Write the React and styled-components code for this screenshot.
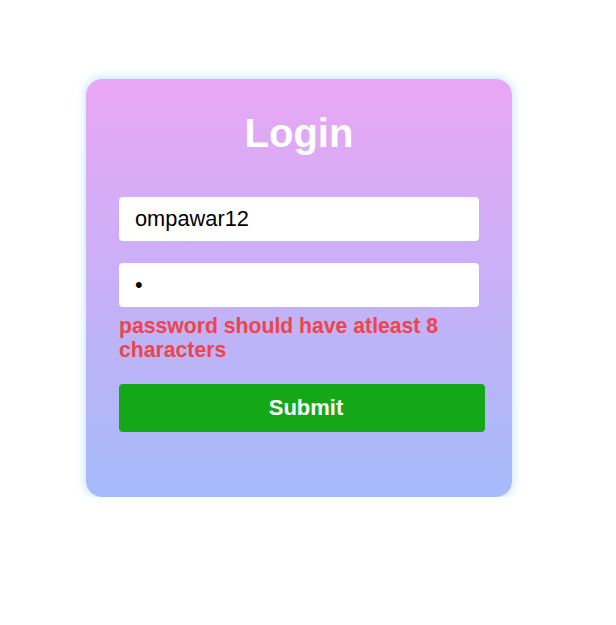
import React from "react";
import styled, { createGlobalStyle } from "styled-components";

const GlobalStyle = createGlobalStyle`
  * {
    box-sizing: border-box;
  }

  body {
    margin: 0;
    background: #ffffff;
    font-family: "Liberation Sans", Arial, sans-serif;
  }
`;

const Page = styled.div`
  padding: 79px 0 0 86px;
`;

const Card = styled.div`
  width: 426px;
  height: 418px;
  padding: 32px 27px 0 33px;
  border-radius: 16px;
  background: linear-gradient(180deg, #e9a6f4 0%, #a5bbfa 100%);
  box-shadow: 0 0 8px 2px rgba(160, 215, 250, 0.55);
`;

const Title = styled.h2`
  margin: 0 0 41px -6px;
  font-size: 40px;
  font-weight: 700;
  color: #ffffff;
  text-align: center;
`;

const Form = styled.form`
  display: flex;
  flex-direction: column;
`;

const Field = styled.input`
  width: 360px;
  height: 44px;
  padding: 0 16px;
  margin-bottom: ${(p) => (p.$last ? "7px" : "22px")};
  border: none;
  border-radius: 4px;
  background: #ffffff;
  font-family: "Liberation Sans", Arial, sans-serif;
  font-size: 21.8px;
  color: #000000;
  outline: none;
`;

const ErrorText = styled.p`
  width: 360px;
  margin: 0 0 22px;
  font-size: 21.2px;
  font-weight: 700;
  color: #f0434a;
`;

const SubmitButton = styled.button`
  width: 366px;
  height: 48px;
  padding: 0 0 0 8px;
  border: none;
  border-radius: 4px;
  background: #14a819;
  color: #ffffff;
  font-family: "Liberation Sans", Arial, sans-serif;
  font-size: 22px;
  font-weight: 700;
  cursor: pointer;
`;

const App = () => {
  return (
    <>
      <GlobalStyle />
      <Page>
        <Card>
          <Title>Login</Title>
          <Form onSubmit={(e) => e.preventDefault()}>
            <Field type="text" defaultValue="ompawar12" />
            <Field type="password" defaultValue="a" $last />
            <ErrorText>password should have atleast 8 characters</ErrorText>
            <SubmitButton type="submit">Submit</SubmitButton>
          </Form>
        </Card>
      </Page>
    </>
  );
};

export default App;
